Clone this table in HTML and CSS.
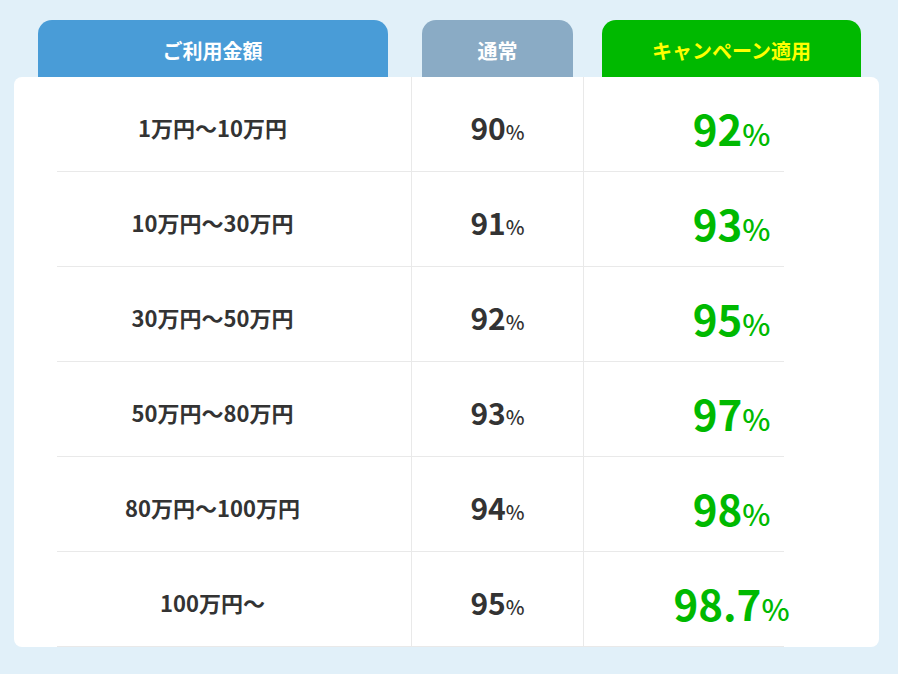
FILE: index.html
```html
<!DOCTYPE html>
<html lang="ja">
<head>
<meta charset="utf-8">
<link rel="stylesheet" href="styles.css">
</head>
<body>
<div class="wrap">
  <div class="tabs">
    <div class="tab tab-amount">ご利用金額</div>
    <div class="tab tab-normal">通常</div>
    <div class="tab tab-campaign">キャンペーン適用</div>
  </div>
  <div class="card">
    <div class="row"><div class="cell c1">1万円〜10万円</div><div class="cell c2"><span>90<small>%</small></span></div><div class="cell c3"><span>92<small>%</small></span></div></div>
    <div class="row"><div class="cell c1">10万円〜30万円</div><div class="cell c2"><span>91<small>%</small></span></div><div class="cell c3"><span>93<small>%</small></span></div></div>
    <div class="row"><div class="cell c1">30万円〜50万円</div><div class="cell c2"><span>92<small>%</small></span></div><div class="cell c3"><span>95<small>%</small></span></div></div>
    <div class="row"><div class="cell c1">50万円〜80万円</div><div class="cell c2"><span>93<small>%</small></span></div><div class="cell c3"><span>97<small>%</small></span></div></div>
    <div class="row"><div class="cell c1">80万円〜100万円</div><div class="cell c2"><span>94<small>%</small></span></div><div class="cell c3"><span>98<small>%</small></span></div></div>
    <div class="row"><div class="cell c1">100万円〜</div><div class="cell c2"><span>95<small>%</small></span></div><div class="cell c3"><span>98.7<small>%</small></span></div></div>
  </div>
</div>
</body>
</html>
```

FILE: styles.css
```css
html, body {
  margin: 0;
  padding: 0;
  background: #e1f0f9;
}
body {
  font-family: "Noto Sans CJK JP", "Noto Sans", sans-serif;
  font-weight: 700;
  color: #333;
}
.wrap {
  width: 865px;
  padding: 20px 0 0 14px;
}
.tabs {
  display: grid;
  grid-template-columns: 397px 173px 295px;
  height: 57px;
}
.tab {
  justify-self: center;
  height: 57px;
  border-radius: 14px 14px 0 0;
  display: flex;
  align-items: center;
  justify-content: center;
  padding-top: 4px;
  box-sizing: border-box;
  font-size: 20px;
  color: #fff;
  line-height: 1;
}
.tab-amount { width: 350px; background: #499cd7; }
.tab-normal { width: 151px; background: #8aabc5; }
.tab-campaign { width: 259px; background: #00b900; color: #ffff00; }
.card {
  background: #fff;
  border-radius: 8px;
  overflow: hidden;
}
.row {
  display: grid;
  grid-template-columns: 397px 173px 295px;
  height: 95px;
  background: linear-gradient(#e9e9e9, #e9e9e9) 43px 100% / 727px 1px no-repeat;
}
.cell {
  display: flex;
  align-items: center;
  justify-content: center;
  line-height: 1;
}
.c1 {
  font-size: 22px;
  padding-top: 4px;
}
.c2 {
  font-size: 30px;
  border-left: 1px solid #e9e9e9;
  border-right: 1px solid #e9e9e9;
  padding-top: 4px;
}
.c2 small { font-size: 20px; }
.c3 {
  font-size: 42px;
  color: #00b900;
  padding-top: 6px;
}
.c3 small { font-size: 30px; }
small {
  font-weight: 500;
}
```
